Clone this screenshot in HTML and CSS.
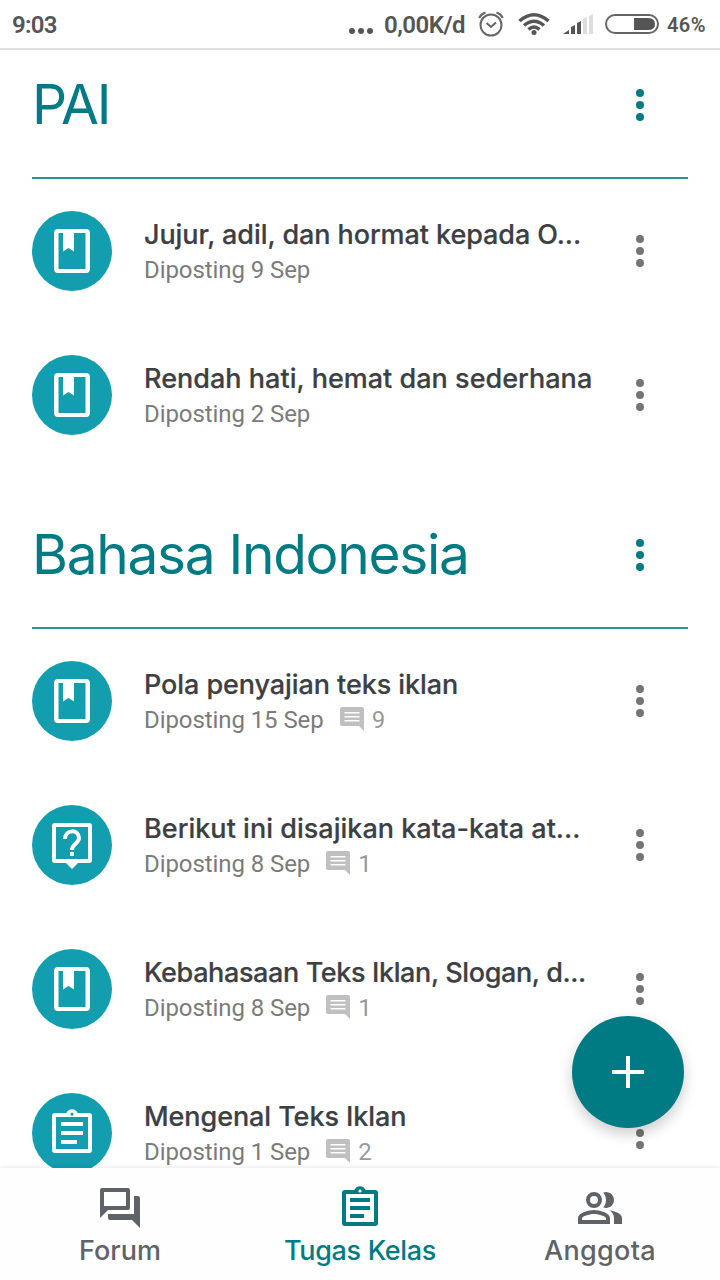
FILE: index.html
```html
<!DOCTYPE html>
<html lang="id">
<head>
<meta charset="utf-8">
<title>Tugas Kelas</title>
<link rel="stylesheet" href="styles.css">
</head>
<body>
<svg class="defs" width="0" height="0">
  <symbol id="book" viewBox="0 0 48 48"><path fill-rule="evenodd" d="M10 2H38Q42 2 42 6V42Q42 46 38 46H10Q6 46 6 42V6Q6 2 10 2ZM10.500 6V42H37.500V6H26V24.500L20.500 21L15 24.500V6Z"/></symbol>
  <symbol id="question" viewBox="0 0 48 48"><path fill-rule="evenodd" d="M7 2H41Q44 2 44 5V39Q44 42 41 42H30L24 48L18 42H7Q4 42 4 39V5Q4 2 7 2ZM8 6V38H40V6Z"/><path class="stroke" d="M17 18C17 8 31 8 31 17C31 22.500 24 22.500 24 29"/><path d="M22 31h4v4h-4z"/></symbol>
  <symbol id="task" viewBox="0 0 48 48"><path fill-rule="evenodd" d="M7 4H18.400A6 6 0 0 1 29.600 4H41Q44 4 44 7V41Q44 44 41 44H7Q4 44 4 41V7Q4 4 7 4ZM8 8V40H40V8ZM24 3.500A1.600 1.600 0 1 0 24 6.700A1.600 1.600 0 1 0 24 3.500Z"/><path d="M13 13H35v4H13zM13 22H35v4H13zM13 31H29v4H13z"/></symbol>
  <symbol id="comment" viewBox="0 0 24 24"><path fill-rule="evenodd" d="M2 0H22Q24 0 24 2V24L19 19H2Q0 19 0 17V2Q0 0 2 0ZM4.500 5V6.500H19.500V5ZM4.500 9V10.500H19.500V9ZM4.500 13V14.500H19.500V13Z"/></symbol>
  <symbol id="more" viewBox="0 0 48 48"><circle cx="24" cy="12" r="4"/><circle cx="24" cy="24" r="4"/><circle cx="24" cy="36" r="4"/></symbol>
</svg>

<header class="status">
  <span class="clock">9:03</span>
  <div class="indicators">
    <svg class="ellipsis" width="24" height="8"><circle cx="3" cy="4" r="3"/><circle cx="12" cy="4" r="3"/><circle cx="21" cy="4" r="3"/></svg>
    <span class="speed">0,00K/d</span>
    <svg class="alarm line" width="26" height="26" viewBox="0 0 26 26"><circle cx="13" cy="14" r="10.500"/><path d="M8.500 12L13 16L18 11.500M1.200 7Q3 3 7.500 1.500M24.800 7Q23 3 18.500 1.500"/></svg>
    <svg class="wifi" width="32" height="24" viewBox="0 0 32 24"><g class="waves"><path d="M1.500 9Q16-3.500 30.500 9M6 13.500Q16 5 26 13.500M10.500 17.500Q16 12.500 21.500 17.500"/></g><circle cx="16" cy="20.500" r="2.500"/></svg>
    <svg class="signal" width="30" height="20" viewBox="0 0 30 20"><path d="M0 20L6 16V20ZM8 13L12 11V20H8ZM14 9L18 7V20H14Z"/><path class="weak" d="M20 5L24 3V20H20ZM26 2L30 0V20H26Z"/></svg>
    <svg class="battery" width="54" height="20" viewBox="0 0 54 20"><rect class="shell" x="1" y="1" width="52" height="18" rx="9"/><path d="M29 4H43Q50 4 50 10Q50 16 43 16H29Z"/></svg>
    <span class="percent">46%</span>
  </div>
</header>

<main class="content">
  <section>
    <div class="topic topic-first"><h1 class="t-pai">PAI</h1><svg class="more accent"><use href="#more"/></svg></div>
    <article class="row"><div class="badge"><svg><use href="#book"/></svg></div><div class="info"><h2>Jujur, adil, dan hormat kepada O...</h2><p>Diposting 9 Sep</p></div><svg class="more"><use href="#more"/></svg></article>
    <article class="row"><div class="badge"><svg><use href="#book"/></svg></div><div class="info"><h2 class="loose">Rendah hati, hemat dan sederhana</h2><p>Diposting 2 Sep</p></div><svg class="more"><use href="#more"/></svg></article>
  </section>
  <section>
    <div class="topic"><h1>Bahasa Indonesia</h1><svg class="more accent"><use href="#more"/></svg></div>
    <article class="row"><div class="badge"><svg><use href="#book"/></svg></div><div class="info"><h2>Pola penyajian teks iklan</h2><p>Diposting 15 Sep<span class="comments"><svg><use href="#comment"/></svg>9</span></p></div><svg class="more"><use href="#more"/></svg></article>
    <article class="row"><div class="badge"><svg><use href="#question"/></svg></div><div class="info"><h2 class="loose">Berikut ini disajikan kata-kata at...</h2><p>Diposting 8 Sep<span class="comments"><svg><use href="#comment"/></svg>1</span></p></div><svg class="more"><use href="#more"/></svg></article>
    <article class="row"><div class="badge"><svg><use href="#book"/></svg></div><div class="info"><h2 class="tight">Kebahasaan Teks Iklan, Slogan, d...</h2><p>Diposting 8 Sep<span class="comments"><svg><use href="#comment"/></svg>1</span></p></div><svg class="more"><use href="#more"/></svg></article>
    <article class="row"><div class="badge"><svg><use href="#task"/></svg></div><div class="info"><h2>Mengenal Teks Iklan</h2><p>Diposting 1 Sep<span class="comments"><svg><use href="#comment"/></svg>2</span></p></div><svg class="more"><use href="#more"/></svg></article>
  </section>
</main>

<button class="fab" aria-label="Tambah"><svg width="32" height="32"><path d="M14 0h4v14h14v4H18v14h-4V18H0v-4h14z"/></svg></button>

<nav class="tabs">
  <a class="tab"><svg viewBox="0 0 24 24"><path fill-rule="evenodd" d="M3 2H16Q17 2 17 3V12Q17 13 16 13H6L2 17V3Q2 2 3 2ZM4 4V11H15V4Z"/><path d="M19 6h2q1 0 1 1v15l-4-4H7q-1 0-1-1v-2h13z"/></svg><span>Forum</span></a>
  <a class="tab active"><svg viewBox="0 0 24 24"><path fill-rule="evenodd" d="M4.500 3H9.200A3 3 0 0 1 14.800 3H19.500Q21 3 21 4.500V19.500Q21 21 19.500 21H4.500Q3 21 3 19.500V4.500Q3 3 4.500 3ZM5 5V19H19V5ZM12 2.700A.8.8 0 1 0 12 4.300A.8.8 0 1 0 12 2.700Z"/><path d="M7 7h10v2H7zM7 11h10v2H7zM7 15h7v2H7z"/></svg><span>Tugas Kelas</span></a>
  <a class="tab wide"><svg viewBox="0 0 24 24"><path fill-rule="evenodd" d="M9 4a4 4 0 1 0 0 8a4 4 0 1 0 0-8zm0 2a2 2 0 1 1 0 4a2 2 0 1 1 0-4z"/><path fill-rule="evenodd" d="M9 13c-2.670 0-8 1.340-8 4v3h16v-3c0-2.660-5.330-4-8-4zm6 5H3v-.99C3.200 16.290 6.300 15 9 15s5.800 1.290 6 2v1zM15 12c2.210 0 4-1.790 4-4s-1.790-4-4-4c-.47 0-.91.1-1.330.24C14.500 5.270 15 6.580 15 8s-.5 2.730-1.330 3.760c.42.14.86.24 1.330.24zM16.670 13.130C18.040 14.060 19 15.320 19 17v3h4v-3c0-2.180-3.570-3.470-6.330-3.870z"/></svg><span>Anggota</span></a>
</nav>
</body>
</html>
```
FILE: styles.css
```css
* { box-sizing: border-box; margin: 0; padding: 0; }
body { width: 720px; height: 1280px; overflow: hidden; background: #fff; font-family: Inter, "Liberation Sans", sans-serif; display: flex; flex-direction: column; position: relative; }
.defs { position: absolute; }
h1, h2 { white-space: nowrap; }

.status { height: 50px; flex: none; border-bottom: 2px solid #e0e0e0; display: flex; justify-content: space-between; align-items: center; padding: 1px 13px 0 12px; font: 700 24px/28px Roboto, sans-serif; color: #555; fill: #555; }
.clock { font-weight: 600; letter-spacing: -.7px; }
.indicators { display: flex; align-items: center; }
.ellipsis { margin: 12px 11px 0 0; }
.speed { width: 82px; letter-spacing: -.5px; font-weight: 600; white-space: nowrap; }
.alarm { margin: -2px 14px 0 12px; }
.line { fill: none; stroke: #666; stroke-width: 2; }
.wifi { margin: -2px 13px 0 0; }
.waves { fill: none; stroke: #555; stroke-width: 3.500; }
.signal { margin: -2px 12px 0 0; }
.weak { fill: #ddd; }
.battery { margin: -2px 8px 0 0; }
.shell { fill: none; stroke: #666; stroke-width: 2; }
.percent { font-size: 20px; font-weight: 600; width: 40px; white-space: nowrap; letter-spacing: .4px; }

.content { flex: 1; min-height: 0; overflow: hidden; padding: 0 32px; }
.topic { height: 162px; border-bottom: 2px solid #2c9097; padding: 56px 24px 40px 0; display: flex; justify-content: space-between; align-items: center; color: #007b83; }
.topic-first { height: 129px; padding-top: 23px; }
.topic h1 { font-size: 55px; font-weight: 400; line-height: 62px; padding-bottom: 2px; letter-spacing: -1.300px; }
.topic .t-pai { letter-spacing: -2.100px; }
.more { width: 48px; height: 48px; flex: none; fill: #757575; }
.more.accent { fill: #007b83; }
.row { height: 144px; padding: 32px 24px 32px 0; display: flex; }
.row .more { margin-top: 16px; }
.badge { width: 80px; height: 80px; flex: none; border-radius: 50%; background: #129eaf; display: flex; align-items: center; justify-content: center; margin-right: 32px; }
.badge svg { width: 48px; height: 48px; fill: #fff; }
.badge .stroke, .stroke { fill: none; stroke: #fff; stroke-width: 4; }
.info { flex: 1; min-width: 0; padding-top: 6px; }
.info h2 { font-size: 27px; line-height: 36px; font-weight: 500; letter-spacing: -.08px; color: #3c4043; -webkit-text-stroke: .2px #3c4043; }
.info h2.loose { letter-spacing: .02px; }
.info h2.tight { letter-spacing: -.380px; }
.info p { display: flex; align-items: center; margin-top: -1px; font: 400 24px/36px Roboto, sans-serif; letter-spacing: -.08px; color: #7b7b7b; }
.comments { display: flex; align-items: center; gap: 8px; margin-left: 16px; color: #999; }
.comments svg { width: 24px; height: 24px; margin-top: -2px; fill: #c0c0c0; }

.fab { position: absolute; left: 572px; top: 1016px; width: 112px; height: 112px; border: 0; border-radius: 50%; background: #007b83; display: flex; align-items: center; justify-content: center; box-shadow: 0 7px 14px rgba(0,0,0,.15), 0 2px 18px rgba(0,0,0,.06); }
.fab svg { fill: #fff; }

.tabs { height: 112px; flex: none; background: #fefefe; display: grid; grid-template-columns: 1fr 1fr 1fr; box-shadow: 0 -1px 4px rgba(0,0,0,.09); position: relative; }
.tab { display: flex; flex-direction: column; align-items: center; padding-top: 16px; color: #5f6368; fill: #5f6368; font-size: 27px; line-height: 38px; font-weight: 500; }
.tab svg { width: 48px; height: 48px; }
.tab.active { color: #007b83; fill: #007b83; letter-spacing: -.350px; }
.tab.wide { letter-spacing: .3px; }
```
